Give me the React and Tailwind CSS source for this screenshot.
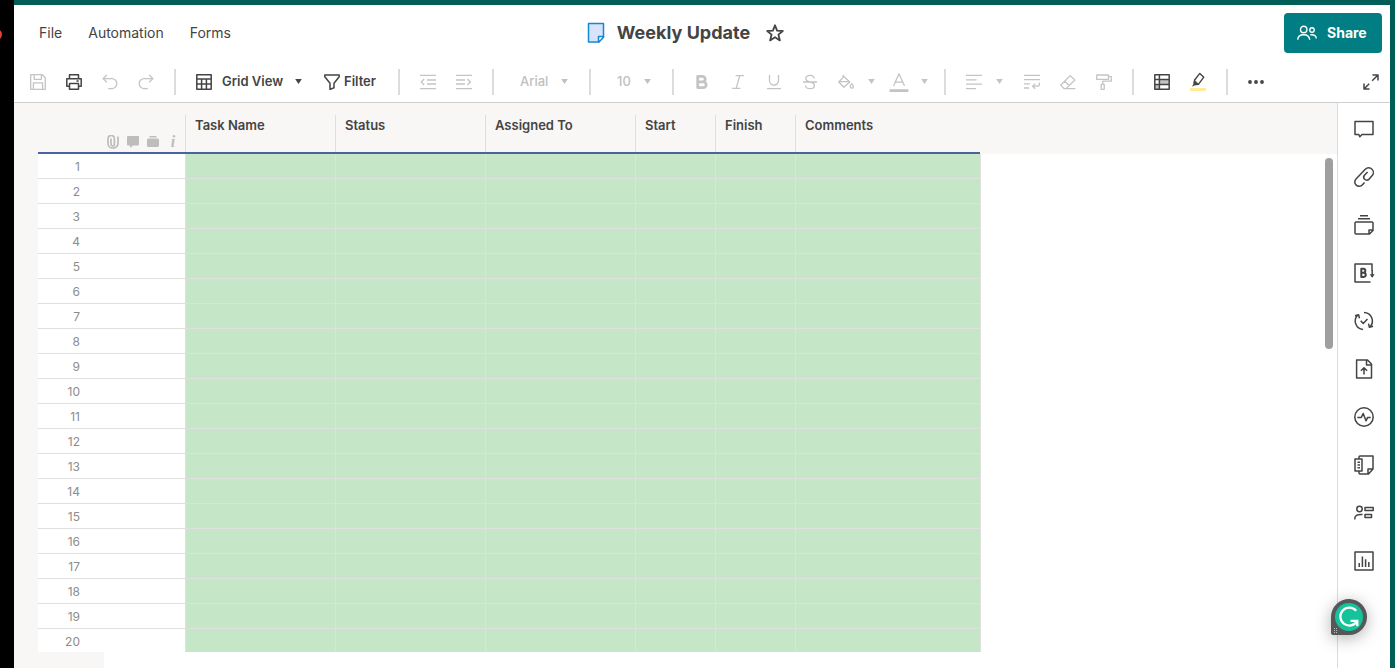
import React from "react";

const columns = [
  { name: "Task Name", width: "w-[150px]" },
  { name: "Status", width: "w-[150px]" },
  { name: "Assigned To", width: "w-[150px]" },
  { name: "Start", width: "w-[80px]" },
  { name: "Finish", width: "w-[80px]" },
  { name: "Comments", width: "w-[186px]" },
];
const rows = Array.from({ length: 20 }, (_, i) => i + 1);

function Icon({ size = 16, className = "", children, sw = 1.3 }) {
  return (
    <svg
      width={size}
      height={size}
      viewBox={`0 0 ${size} ${size}`}
      fill="none"
      stroke="currentColor"
      strokeWidth={sw}
      strokeLinejoin="round"
      className={`shrink-0 ${className}`}
      aria-hidden="true"
    >
      {children}
    </svg>
  );
}

function Caret({ className = "" }) {
  return (
    <svg width="7" height="5" viewBox="0 0 7 5" className={`shrink-0 ${className}`} aria-hidden="true">
      <path d="M0.2 0h6.6L3.5 5z" fill="currentColor" />
    </svg>
  );
}

function Tool({ label, off, children }) {
  return (
    <button
      type="button"
      aria-label={label}
      disabled={off}
      className={`flex h-9 w-9 shrink-0 items-center justify-center ${off ? "text-[#c4c4c4]" : "text-[#444]"}`}
    >
      {children}
    </button>
  );
}

function SplitTool({ label, width, children }) {
  return (
    <button
      type="button"
      aria-label={label}
      aria-haspopup="menu"
      disabled
      className={`flex h-9 shrink-0 items-center text-[#c4c4c4] ${width}`}
    >
      <span className="flex w-9 items-center justify-center">{children}</span>
      <Caret className="ml-1" />
    </button>
  );
}

function Divider() {
  return <span className="mx-2.5 h-[26px] w-0.5 shrink-0 bg-[#dcdcdc]" />;
}

function SelectTool({ label, value, width }) {
  return (
    <label className={`relative flex h-9 shrink-0 items-center text-[#c0c0c0] ${width}`}>
      <select
        aria-label={label}
        disabled
        className="h-full w-full appearance-none bg-transparent pl-4 font-medium opacity-100"
      >
        <option>{value}</option>
      </select>
      <Caret className="pointer-events-none absolute right-[11px]" />
    </label>
  );
}

function Toolbar() {
  return (
    <div className="flex h-[41px] items-center pl-1.5 text-[13px]">
      <Tool label="Save" off>
        <Icon>
          <path d="M.7.7h11.6l3 3v11.6H.7zM4.2.7v4.6h7.2V.7M3.4 15.3V8.8h9.2v6.5" />
        </Icon>
      </Tool>
      <Tool label="Print">
        <Icon sw={1.5}>
          <path d="M3.5 4.5V.8h9v3.7M3.3 12.3H.8V4.7h14.4v7.6h-2.5M3.5 9.6h9v5.6h-9zM10.5 7h2.2" />
        </Icon>
      </Tool>
      <Tool label="Undo" off>
        <Icon>
          <path d="M4.8 1 1 4.6l3.8 3.6M1 4.6h8.8a5 5 0 0 1 0 10H6.2" />
        </Icon>
      </Tool>
      <Tool label="Redo" off>
        <Icon>
          <path d="m11.2 1 3.8 3.6-3.8 3.6M15 4.6H6.2a5 5 0 0 0 0 10h3.6" />
        </Icon>
      </Tool>
      <Divider />
      <label className="relative flex h-9 w-32 shrink-0 items-center pl-2.5 text-[#444]">
        <Icon sw={1.5}>
          <path d="M.8.8h14.4v14.4H.8zM.8 5h14.4M.8 10.1h14.4M5.6 5v10.2M10.4 5v10.2" />
        </Icon>
        <select aria-label="View" className="h-full w-full appearance-none bg-transparent pl-2.5 font-semibold">
          <option>Grid View</option>
        </select>
        <Caret className="pointer-events-none absolute right-[12px]" />
      </label>
      <button type="button" className="flex h-9 w-[74px] shrink-0 items-center gap-1 pl-2.5 font-semibold text-[#444]">
        <Icon sw={1.5}>
          <path d="M.8 1h14.4v1.7L10 9.2v4.6l-4 1.6V9.2L.8 2.7z" />
        </Icon>
        Filter
      </button>
      <Divider />
      <Tool label="Outdent" off>
        <Icon>
          <path d="M0 1.4h16M7 6h9M7 10h9M0 14.6h16M4.2 5 1.2 8l3 3" />
        </Icon>
      </Tool>
      <Tool label="Indent" off>
        <Icon>
          <path d="M0 1.4h16M0 6h9M0 10h9M0 14.6h16M11.4 5l3 3-3 3" />
        </Icon>
      </Tool>
      <Divider />
      <SelectTool label="Font" value="Arial" width="w-[75px]" />
      <Divider />
      <SelectTool label="Font size" value="10" width="w-[61px]" />
      <Divider />
      <Tool label="Bold" off>
        <Icon sw={2.8}>
          <path d="M3.7 2.4h4.8a2.6 2.6 0 0 1 0 5.4H3.7zM3.7 7.8h5.6a2.9 2.9 0 0 1 0 5.8H3.7z" />
        </Icon>
      </Tool>
      <Tool label="Italic" off>
        <Icon>
          <path d="M5.6 1.6h8.2M2.2 14.4h8.2M9.8 1.6 6.2 14.4" />
        </Icon>
      </Tool>
      <Tool label="Underline" off>
        <Icon>
          <path d="M3.5 1v5.6a4.5 4.5 0 0 0 9 0V1M1 14.6h14" />
        </Icon>
      </Tool>
      <Tool label="Strikethrough" off>
        <Icon>
          <path d="M12.2 4.6C12.2 2.6 10.5 1.4 8 1.4S3.8 2.6 3.8 4.6c0 2 1.6 2.9 4.2 3.4 2.9.5 4.4 1.5 4.4 3.4S10.7 14.6 8 14.6s-4.4-1.2-4.4-3.2M1 8h14" />
        </Icon>
      </Tool>
      <SplitTool label="Fill color" width="w-[53px]">
        <Icon>
          <path d="M5.2.8v2.4M5.8 2.6l6 5.4-6 5.2L.8 8zM1.6 7.600h9.800M13.8 9.600c1.3 1.700 1.600 2.400 1.600 3a1.600 1.600 0 0 1-3.200 0c0-.6.3-1.300 1.600-3z" />
        </Icon>
      </SplitTool>
      <SplitTool label="Text color" width="w-[53px]">
        <Icon size={20}>
          <path d="M4.5 14 10 1.8 15.500 14M6.300 10.200h7.400" />
          <path d="M.6 18.600h18.800" strokeWidth="2.800" />
        </Icon>
      </SplitTool>
      <Divider />
      <SplitTool label="Align" width="w-[58px]">
        <Icon>
          <path d="M0 1.400h16M0 5.800h10.500M0 10.200h16M0 14.600h10" />
        </Icon>
      </SplitTool>
      <Tool label="Wrap text" off>
        <Icon>
          <path d="M0 1.400h16M0 5.600h16M0 9.800h6M0 14h5M15.300 8.400v1.800a2 2 0 0 1-2 2H8.800M11.200 9.600l-2.600 2.600 2.600 2.600" />
        </Icon>
      </Tool>
      <Tool label="Clear formatting" off>
        <Icon>
          <path d="M10.200 1.600l4.600 4.400-8.600 8.600H4L.8 11zM4.600 7.200l4.800 4.400M4 14.600h11.400" />
        </Icon>
      </Tool>
      <Tool label="Format painter" off>
        <Icon>
          <path d="M.7 1h11.800v4.400H.7zM12.500 2.600h2.800v4.600H6.800v3M5.200 10.400h3v5h-3z" />
        </Icon>
      </Tool>
      <Divider />
      <Tool label="Conditional formatting">
        <Icon sw={1.5}>
          <path d="M5 5.300h10v4.900H5zM.8 10.200H5v5H.8z" fill="#c4c4c4" stroke="none" />
          <path d="M.8.8h14.400v14.400H.8zM.8 5.400h14.400M.8 10.400h14.400M5.400.8v14.400" />
        </Icon>
      </Tool>
      <Tool label="Highlight changes">
        <svg width="16" height="20" viewBox="0 0 16 20" fill="none" stroke="currentColor" strokeWidth="1.4" strokeLinejoin="round" className="shrink-0" aria-hidden="true">
          <path d="M0 16h16v3H0z" fill="#ffeb9c" stroke="none" />
          <path d="M9.800 1.400l4 3.800-5.200 7-3.200.4-1.400-1.200.6-3.400z" />
          <path d="M4.600 8.200l4 4-3.200.6-2.900 1.400 1.600-2.800z" fill="currentColor" strokeWidth=".6" />
        </svg>
      </Tool>
      <Divider />
      <Tool label="More">
        <Icon>
          <g fill="currentColor" stroke="none">
            <circle cx="2" cy="8" r="1.900" />
            <circle cx="8" cy="8" r="1.900" />
            <circle cx="14" cy="8" r="1.900" />
          </g>
        </Icon>
      </Tool>
      <div className="ml-auto pr-px">
        <Tool label="Expand">
          <Icon sw={1.5}>
            <path d="M9.500 1h5.500v5.500M15 1 9.200 6.800M6.500 15H1V9.500M1 15l5.200-5.200" />
          </Icon>
        </Tool>
      </div>
    </div>
  );
}

function Header() {
  return (
    <header className="border-b border-[#cfcfcf] bg-white text-[#444]">
      <div className="grid h-14 grid-cols-[1fr_auto_1fr] items-center pr-2 pl-[25px]">
        <nav className="flex gap-[26px] text-sm">
          <a href="#file">File</a>
          <a href="#automation">Automation</a>
          <a href="#forms">Forms</a>
        </nav>
        <div className="flex items-center pr-[50px]">
          <svg width="18" height="22" viewBox="0 0 18 22" className="mr-3 shrink-0" fill="none" stroke="#1589cf" strokeWidth="1.5" strokeLinejoin="round" aria-hidden="true">
            <path d="M1.500 1.500h15v13.500l-5 5h-10z" fill="#d9e3fb" />
            <path d="M11.500 14.500h5v.8L12 20h-.5z" fill="#fff" />
          </svg>
          <h1 className="text-lg font-bold">Weekly Update</h1>
          <button type="button" aria-label="Favorite" className="ml-4">
            <svg width="18" height="18" viewBox="0 0 18 18" fill="none" stroke="currentColor" strokeWidth="1.8" strokeLinejoin="round" aria-hidden="true">
              <path d="M9 1.300l2.100 5.300 5.700.4-4.400 3.600 1.500 5.800L9 13.200l-4.900 3.200 1.500-5.800L1.200 7l5.700-.4z" />
            </svg>
          </button>
        </div>
        <button type="button" className="flex h-10 w-[98px] items-center gap-2.5 justify-self-end rounded-sm bg-[#007e83] pl-[13px] text-sm font-bold text-white">
          <svg width="20" height="16" viewBox="0 0 20 16" fill="none" stroke="currentColor" strokeWidth="1.4" aria-hidden="true">
            <circle cx="6.700" cy="4.500" r="3.200" />
            <circle cx="15" cy="5" r="2.200" />
            <path d="M.7 14.800c.2-3.400 2.400-5 6-5s5.700 1.600 6 5M13.200 9.900c3.600-.8 6 .8 6.100 3.600" />
          </svg>
          Share
        </button>
      </div>
      <Toolbar />
    </header>
  );
}

function RowMarkers() {
  return (
    <div className="flex items-center justify-end gap-2 pr-1.5 pb-0.5 text-[#bdbdbd]">
      <svg width="12" height="14" viewBox="0 0 12 14" fill="none" stroke="currentColor" strokeWidth="1.7" aria-hidden="true">
        <path d="M4 3.500v5.700a1.700 1.700 0 0 0 3.400 0V3.700a3.200 3.200 0 0 0-6.400 0v5A4.600 4.600 0 0 0 5.800 13 4.700 4.700 0 0 0 11 8.600V1.500" />
      </svg>
      <svg width="12" height="12" viewBox="0 0 12 12" fill="currentColor" aria-hidden="true">
        <path d="M1 0h10a1 1 0 0 1 1 1v7.500a1 1 0 0 1-1 1H6L3 12V9.500H1a1 1 0 0 1-1-1V1a1 1 0 0 1 1-1z" />
      </svg>
      <svg width="12" height="12" viewBox="0 0 12 12" fill="currentColor" aria-hidden="true">
        <path d="M2.500 0h7v1.500h-7zM1 2.500h10l1 1v6.500l-1 1H1l-1-1V3.500z" />
      </svg>
      <span className="w-3 text-center font-['Liberation_Serif',serif] text-base leading-4 font-bold italic">i</span>
    </div>
  );
}

function Sheet() {
  return (
    <main className="flex min-w-0 flex-1">
      <div className="flex-1 bg-[linear-gradient(#f8f7f5_51px,#fff_51px)]">
        <div className="flex">
          <div className="w-6 shrink-0 bg-[#f8f7f5]" />
          <table className="w-[943px] table-fixed border-separate border-spacing-0 text-left text-[#444]">
            <thead>
              <tr>
                <th className="h-[51px] w-[147px] border-b-2 border-[#4863a0] p-0 align-bottom" aria-label="Row">
                  <RowMarkers />
                </th>
                {columns.map((c, i) => (
                  <th key={c.name} scope="col" className={`h-[51px] p-0 pt-3 align-top ${c.width}`}>
                    <div className={`border-b-2 border-[#4863a0] ${i === 5 ? "mr-px" : ""}`}>
                      <div className="h-[37px] border-l border-[#dedede] pl-[9px] text-[13px] leading-5 font-semibold">
                        {c.name}
                      </div>
                    </div>
                  </th>
                ))}
              </tr>
            </thead>
            <tbody>
              {rows.map((n) => (
                <tr key={n} className={n < 20 ? "h-[25px]" : "h-[23px]"}>
                  <th
                    scope="row"
                    className={`bg-white p-0 pt-[3px] pr-[105px] text-right align-top text-xs leading-5 font-normal text-[#8c8c8c] ${n < 20 ? "border-b border-[#e0e0e0]" : ""}`}
                  >
                    {n}
                  </th>
                  {columns.map((c, i) => (
                    <td
                      key={c.name}
                      className={`border-l border-[#e0e0e0] bg-[#c6e6c8] p-0 ${n < 20 ? "border-b" : ""} ${i === 5 ? "border-r" : ""}`}
                    />
                  ))}
                </tr>
              ))}
            </tbody>
          </table>
        </div>
        <div className="h-4 w-[90px] bg-[#f8f7f5]" />
      </div>
      <div className="w-3 shrink-0 bg-[linear-gradient(#f8f7f5_51px,#fff_51px)] pt-[55px]">
        <div className="h-[191px] w-2 rounded-full bg-[#9f9f9f]" />
      </div>
    </main>
  );
}

const panels = [
  ["Conversations", <path d="M1 2.500h18v13H8l-2.200 2.300-1-2.300H1z" />],
  [
    "Attachments",
    <path d="M10.500 15.500l-2 2.300a4.300 4.300 0 0 1-6.300.3 4.300 4.300 0 0 1-.2-6.200L11.300 2.300a4.600 4.600 0 0 1 6.700 0 4.600 4.600 0 0 1 0 6.500l-3 3.400a3 3 0 0 1-4.400.1 3 3 0 0 1 0-4.200l3-3.200" />,
  ],
  [
    "Proofs",
    <path d="M6 .8h8M4 3.800h12M2 7h16a1 1 0 0 1 1 1v7.500L15.500 19H2a1 1 0 0 1-1-1V8a1 1 0 0 1 1-1zM19 15h-4v4" />,
  ],
  [
    "Brandfolder",
    <>
      <path d="M18 7.500V1H1v18h15.500" />
      <path d="M18.200 7v7" />
      <path d="M15.700 11.200h5L18.200 14.700z" fill="currentColor" stroke="none" />
      <path d="M7.300 5.800h2a1.900 1.900 0 0 1 0 4H7.300zM7.300 9.800h2.400a2 2 0 0 1 0 4.100H7.300z" strokeWidth="2" />
    </>,
  ],
  [
    "Update requests",
    <path d="M9 18.500A8.500 8.500 0 0 1 3.600 4.200M1 4.700l3.600-1 .9 3.700M10 1.500a8.500 8.500 0 0 1 6 14.400M19 15.300l-3.600 1-.9-3.700M6.700 9.700l2.500 2.700 4.300-4.400" />,
  ],
  [
    "Publish",
    <path d="M2.600 1h10.900l4 4v14H2.600zM12.500 1v5h5M10 15.500V9M6.900 11.700 10 8.800l3.100 2.900" />,
  ],
  [
    "Activity log",
    <>
      <circle cx="10" cy="10" r="9.200" />
      <path d="M3.300 10.400h4L9.200 6.500l2.800 7.300 1.700-3.400h3" />
    </>,
  ],
  [
    "Summary",
    <path d="M5 4V2a1 1 0 0 1 1-1h13v13l-4.500 5H6a1 1 0 0 1-1-1v-2M1 4h7v12H1zM19 14h-5v5M3.500 7.300h2.500M3.500 10h2.500M3.500 12.700h2.500" />,
  ],
  [
    "Contacts",
    <>
      <circle cx="5.500" cy="6" r="2.700" />
      <path d="M.7 16.500c0-4 2-5.300 7.800-5.100M11 4.500h8.200v3H11zM11 11.500h6.500v3H11z" />
    </>,
  ],
  ["Charts", <path d="M1 1h18v18H1zM5.200 12v4M8.400 5.500V16M11.600 8.300V16M14.800 11v5" />],
];

function SideRail() {
  return (
    <aside className="relative w-[53px] shrink-0 border-l border-[#dcdcdc] bg-white pt-0.5 text-[#444]">
      <div className="flex flex-col">
        {panels.map(([label, art]) => (
          <button key={label} type="button" aria-label={label} className="flex h-12 items-center justify-center">
            <svg width="20" height="20" viewBox="0 0 20 20" fill="none" stroke="currentColor" strokeWidth="1.5" strokeLinejoin="round" overflow="visible" aria-hidden="true">
              {art}
            </svg>
          </button>
        ))}
      </div>
      <button type="button" aria-label="Grammarly" className="absolute top-[496px] -left-[7px] drop-shadow-[0_3px_8px_rgba(0,0,0,0.3)]">
        <svg width="36" height="36" viewBox="0 0 36 36" aria-hidden="true">
          <path d="M0 34V17.500A18 18 0 1 1 18 36H2a2 2 0 0 1-2-2z" fill="#555759" />
          <circle cx="18" cy="18" r="14" fill="#15c39a" />
          <path d="M25.200 11.700A9 9 0 1 0 26 22.300M19.500 21.800h6.800v5.500" fill="none" stroke="#fff" strokeWidth="2.300" />
          <g fill="#bbb">
            <path d="M3 29h1v1H3zM5 29h1v1H5zM3 31h1v1H3zM5 31h1v1H5zM3 33h1v1H3zM5 33h1v1H5z" />
          </g>
        </svg>
      </button>
    </aside>
  );
}

export default function App() {
  return (
    <div className="flex min-h-screen bg-white pb-0.5 font-['Inter',sans-serif]">
      <div className="relative w-3.5 shrink-0 overflow-hidden bg-black">
        <span className="absolute top-[29px] -left-[9px] h-[11px] w-[11px] rounded-full bg-[#e2452c]" />
      </div>
      <div className="flex min-w-0 flex-1 flex-col border-t-[5px] border-r-[5px] border-[#005e56]">
        <Header />
        <div className="flex flex-1">
          <Sheet />
          <SideRail />
        </div>
      </div>
    </div>
  );
}
